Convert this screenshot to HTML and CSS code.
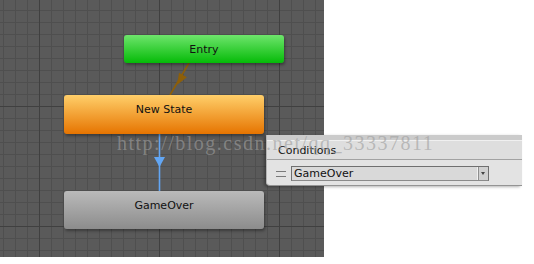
FILE: index.html
```html
<!DOCTYPE html>
<html lang="en">
<head>
    <meta charset="UTF-8">
    <title>Animator</title>
    <link rel="stylesheet" href="styles.css">
</head>
<body>
    <div class="graph">
        <svg class="edges" width="324" height="257" viewBox="0 0 324 257">
            <!-- Entry -> New State -->
            <line x1="189" y1="63" x2="170" y2="95" stroke="#8e5f08" stroke-width="1.6"/>
            <polygon points="179,72.7 186.9,77.3 177.2,84.8" fill="#8e5f08"/>
            <!-- New State -> GameOver -->
            <line x1="159.5" y1="134" x2="159.5" y2="191" stroke="#62a6f4" stroke-width="1.6"/>
            <polygon points="154,157 165,157 159.5,167" fill="#62a6f4"/>
        </svg>
        <div class="node entry">Entry</div>
        <div class="node state">New State</div>
        <div class="node over">GameOver</div>
    </div>

    <div class="inspector">
        <div class="inspector-top"></div>
        <div class="cond-head">Conditions</div>
        <div class="cond-row">
            <span class="handle"></span>
            <div class="select">
                <span class="select-text">GameOver</span>
                <span class="select-arrow"></span>
            </div>
        </div>
    </div>

    <div class="watermark">http://blog.csdn.net/qq_33337811</div>
</body>
</html>
```

FILE: styles.css
```css
/* page */
body {
    margin: 0;
    background: #fff;
    font-family: 'DejaVu Sans', sans-serif;
    font-size: 11px;
    color: #111;
    position: relative;
    width: 534px;
    height: 264px;
    overflow: hidden;
}

/* grid canvas */
.graph {
    position: relative;
    width: 324px;
    height: 257px;
    background-color: #5a5a5a;
    background-image:
        linear-gradient(to right, #404040 1px, transparent 1px),
        linear-gradient(to bottom, #404040 1px, transparent 1px),
        linear-gradient(to right, #4f4f4f 1px, transparent 1px),
        linear-gradient(to bottom, #4f4f4f 1px, transparent 1px);
    background-size: 120px 120px, 120px 120px, 12px 12px, 12px 12px;
    background-position: 39px 0, 0 106px, 3px 0, 0 10px;
}

.edges {
    position: absolute;
    left: 0;
    top: 0;
}

/* state nodes */
.node {
    position: absolute;
    box-sizing: border-box;
    padding-top: 8px;
    line-height: 14px;
    text-align: center;
    border-radius: 3px;
    box-shadow: 1px 2px 3px rgba(0,0,0,0.35);
}
.node.entry {
    left: 124px;
    top: 35px;
    width: 160px;
    height: 28px;
    background: linear-gradient(to bottom, #6ee56c, #05bb08);
}
.node.state {
    left: 64px;
    top: 95px;
    width: 200px;
    height: 39px;
    background: linear-gradient(to bottom, #ffcf6a, #e67400);
}
.node.over {
    left: 64px;
    top: 191px;
    width: 200px;
    height: 38px;
    background: linear-gradient(to bottom, #bababa, #8c8c8c);
}

/* inspector conditions */
.inspector {
    position: absolute;
    left: 266px;
    top: 135px;
    width: 255px;
    background: #e3e3e3;
    border-left: 1px solid #b4b4b4;
    border-bottom: 1px solid #949494;
    border-radius: 0 0 0 4px;
    box-shadow: -2px 1px 3px rgba(0,0,0,0.3);
}
.inspector-top {
    height: 5px;
    background: #cbcbcb;
    border-bottom: 1px solid #f0f0f0;
}
.cond-head {
    height: 18px;
    line-height: 19px;
    padding-left: 11px;
    background: #dedede;
    border-bottom: 1px solid #a2a2a2;
}
.cond-row {
    height: 25px;
    display: flex;
    align-items: center;
    padding-left: 9px;
    gap: 5px;
}
.handle {
    width: 10px;
    height: 4px;
    border-top: 1px solid #7a7a7a;
    border-bottom: 1px solid #7a7a7a;
    margin-top: 2px;
}
.select {
    box-sizing: border-box;
    width: 198px;
    height: 15px;
    display: flex;
    border: 1px solid #6f6f6f;
    border-bottom-color: #8a8a8a;
    background: #d9d9d9;
    margin-top: 1px;
}
.select-text {
    flex: 1;
    padding-left: 2px;
    line-height: 13px;
    border-right: 1px solid #f2f2f2;
}
.select-arrow {
    width: 9px;
    position: relative;
    background: #d0d0d0;
    border-left: 1px solid #8e8e8e;
}
.select-arrow::after {
    content: '';
    position: absolute;
    left: 2px;
    top: 5px;
    border-left: 2.5px solid transparent;
    border-right: 2.5px solid transparent;
    border-top: 3px solid #444;
}

/* blog watermark */
.watermark {
    position: absolute;
    left: 117px;
    top: 133px;
    font-family: 'Liberation Serif', serif;
    font-size: 20px;
    line-height: 20px;
    letter-spacing: 1.5px;
    color: rgba(158,158,158,0.62);
    white-space: nowrap;
}
```
